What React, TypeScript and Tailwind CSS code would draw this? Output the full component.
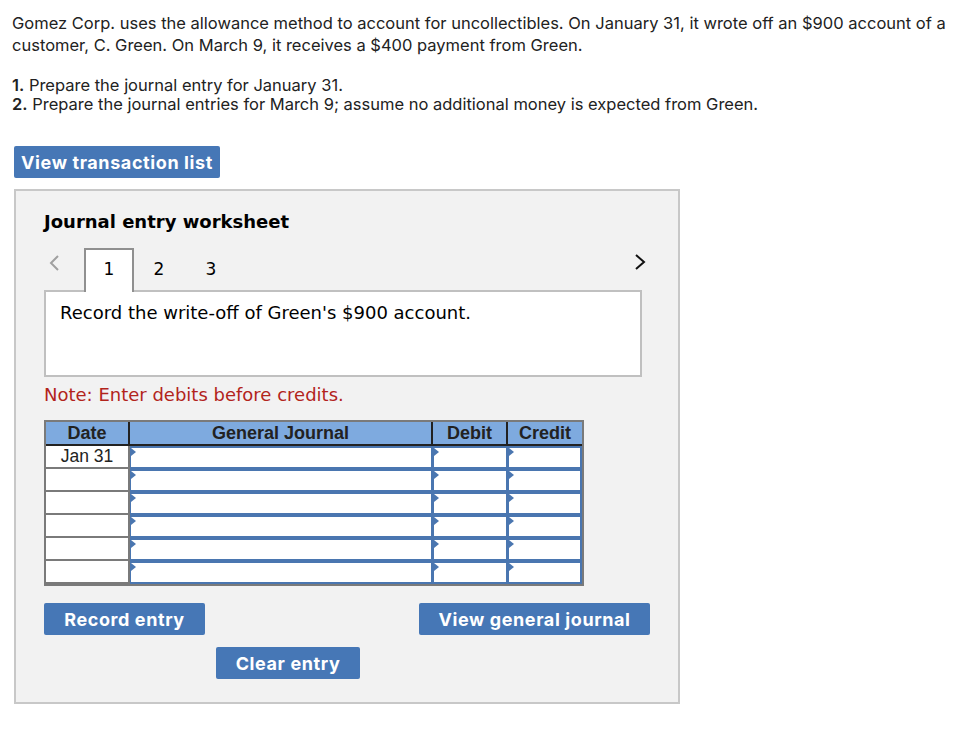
import React from "react";

const rows = [0, 1, 2, 3, 4, 5];

function Cell({ w, children }: { w: string; children?: React.ReactNode }) {
  return (
    <div className={`relative ${w} h-full bg-white border-[2px] border-[#4a76b0] border-l-[1px]`}>
      <div className="absolute left-0 top-0 w-0 h-0 border-t-[4px] border-b-[4px] border-l-[5px] border-t-transparent border-b-transparent border-l-[#4a76b0]" />
      {children}
    </div>
  );
}

const btn = "rounded-[2px] bg-[#4677b6] text-white font-bold text-[18px] tracking-[0.6px] flex items-center justify-center font-['Inter',sans-serif]";

export default function App() {
  return (
    <div className="w-[980px] h-[744px] bg-white text-[#222] font-['Inter',sans-serif]">
      <div className="pl-3 pt-[12px] text-[16.5px] leading-[22px] w-[960px]">
        <p>
          Gomez Corp. uses the allowance method to account for uncollectibles. On January 31, it wrote off an $900 account of a customer, C. Green. On March 9, it receives a $400 payment from Green.
        </p>
        <div className="mt-[20px] leading-[19px]">
          <p><b className="font-semibold">1.</b> Prepare the journal entry for January 31.</p>
          <p><b className="font-semibold">2.</b> Prepare the journal entries for March 9; assume no additional money is expected from Green.</p>
        </div>
      </div>

      <div className={`ml-[14px] mt-[32px] w-[206px] h-[32px] ${btn}`}>View transaction list</div>

      <div className="ml-[14px] mt-[11px] w-[666px] h-[515px] border-[2px] border-[#c8c8c8] bg-[#f2f2f2] pl-[28px] font-['DejaVu_Sans',Verdana,sans-serif]">
        <div className="pt-[20px] text-[18px] font-bold text-black leading-[22px]">Journal entry worksheet</div>

        <div className="mt-[14px] w-[602px] flex items-end h-[43px] relative">
          <div className="w-[40px] h-full flex items-start pt-[7px] pl-[4px]">
            <svg width="12" height="18" viewBox="0 0 12 18"><path d="M10 2 L3 9 L10 16" stroke="#a0a0a0" strokeWidth="2" fill="none" /></svg>
          </div>
          <div className="w-[50px] h-[44px] border-[2px] border-b-0 border-[#909090] bg-white flex items-center justify-center text-[17px] text-black relative z-10 -mb-[2px] pb-[2px]">1</div>
          <div className="w-[50px] h-full flex items-center justify-center text-[17px] text-black pt-[2px]">2</div>
          <div className="w-[54px] h-full flex items-center justify-center text-[17px] text-black pt-[2px]">3</div>
          <div className="flex-1 h-full flex items-start justify-end pt-[7px]">
            <svg width="12" height="18" viewBox="0 0 12 18"><path d="M2 1 L10 8 L2 15" stroke="#111" strokeWidth="2" fill="none" /></svg>
          </div>
        </div>
        <div className="w-[598px] h-[87px] bg-white border-[2px] border-[#c0c0c0] px-[14px] pt-[10px] text-[18px] text-black leading-[22px]">
          Record the write-off of Green's $900 account.
        </div>

        <div className="mt-[7px] text-[18px] text-[#b2241c] leading-[22px]">Note: Enter debits before credits.</div>

        <div className="mt-[14px] w-[540px] border-[2px] border-[#7a7a7a] bg-[#7a7a7a] font-['Liberation_Sans',Arial,sans-serif]">
          <div className="flex h-[24px] bg-[#7eaadf] text-[18px] font-bold text-[#222] border-b-[2px] border-[#222]">
            <div className="w-[84px] flex items-center justify-center border-r-[2px] border-[#222]">Date</div>
            <div className="w-[303px] flex items-center justify-center border-r-[2px] border-[#222]">General Journal</div>
            <div className="w-[75px] flex items-center justify-center border-r-[2px] border-[#222]">Debit</div>
            <div className="flex-1 flex items-center justify-center">Credit</div>
          </div>
          {rows.map((r) => (
            <div key={r} className="flex h-[23px]">
              <div className="w-[84px] h-full bg-white border-r-[2px] border-b-[2px] border-[#7a7a7a] flex items-center justify-center text-[17.5px] text-[#222]">
                {r === 0 ? "Jan 31" : ""}
              </div>
              <Cell w="w-[303px]" />
              <Cell w="w-[75px]" />
              <Cell w="flex-1" />
            </div>
          ))}
        </div>

        <div className="mt-[17px] w-[606px] flex justify-between">
          <div className={`w-[161px] h-[32px] ${btn}`}>Record entry</div>
          <div className={`w-[231px] h-[32px] ${btn}`}>View general journal</div>
        </div>
        <div className={`mt-[12px] ml-[172px] w-[144px] h-[32px] ${btn}`}>Clear entry</div>
      </div>
    </div>
  );
}
